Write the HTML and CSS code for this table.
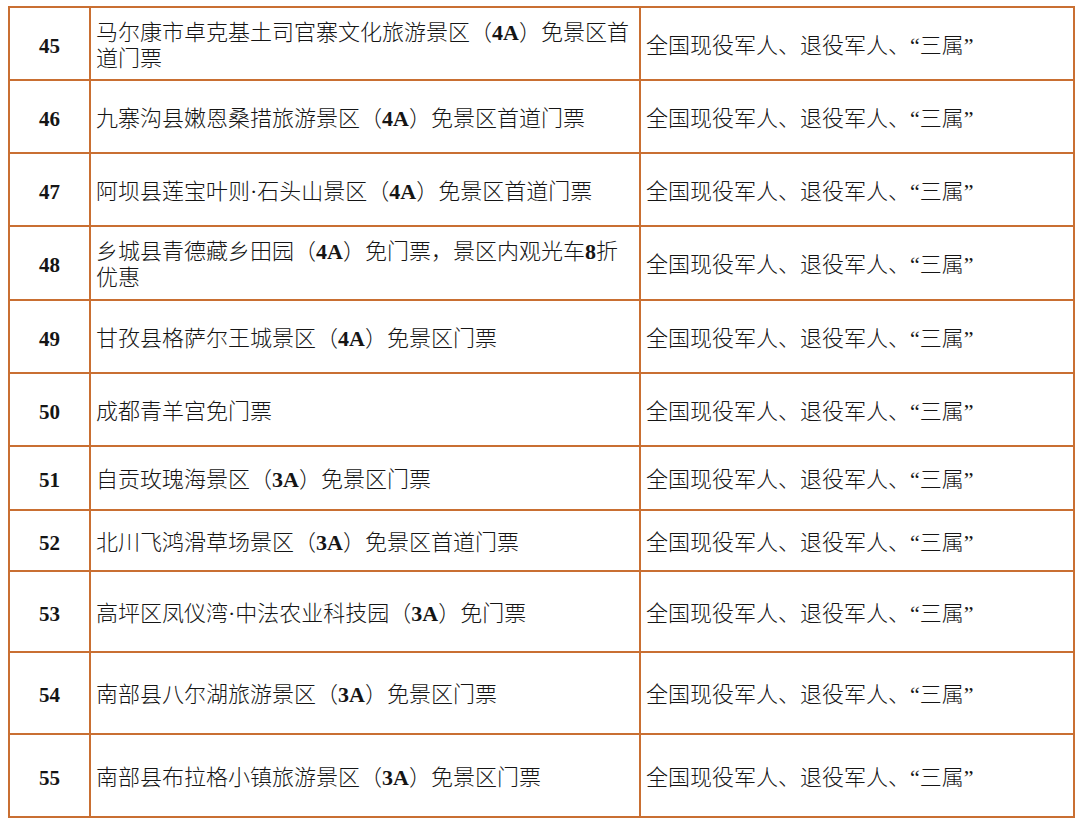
FILE: index.html
```html
<!DOCTYPE html>
<html lang="zh-CN">
<head>
<meta charset="utf-8">
<title>景区优惠名单</title>
<link rel="stylesheet" href="styles.css">
</head>
<body>
<table class="list">
  <colgroup>
    <col class="c-no">
    <col class="c-name">
    <col class="c-who">
  </colgroup>
  <tbody>
    <tr class="r73"><td class="no">45</td><td class="name">马尔康市卓克基土司官寨文化旅游景区（<b>4A</b>）免景区首道门票</td><td class="who">全国现役军人、退役军人、“三属”</td></tr>
    <tr class="r73"><td class="no">46</td><td class="name">九寨沟县嫩恩桑措旅游景区（<b>4A</b>）免景区首道门票</td><td class="who">全国现役军人、退役军人、“三属”</td></tr>
    <tr class="r73"><td class="no">47</td><td class="name">阿坝县莲宝叶则·石头山景区（<b>4A</b>）免景区首道门票</td><td class="who">全国现役军人、退役军人、“三属”</td></tr>
    <tr class="r74"><td class="no">48</td><td class="name">乡城县青德藏乡田园（<b>4A</b>）免门票，景区内观光车<b>8</b>折优惠</td><td class="who">全国现役军人、退役军人、“三属”</td></tr>
    <tr class="r73"><td class="no">49</td><td class="name">甘孜县格萨尔王城景区（<b>4A</b>）免景区门票</td><td class="who">全国现役军人、退役军人、“三属”</td></tr>
    <tr class="r73"><td class="no">50</td><td class="name">成都青羊宫免门票</td><td class="who">全国现役军人、退役军人、“三属”</td></tr>
    <tr class="r64"><td class="no">51</td><td class="name">自贡玫瑰海景区（<b>3A</b>）免景区门票</td><td class="who">全国现役军人、退役军人、“三属”</td></tr>
    <tr class="r61"><td class="no">52</td><td class="name">北川飞鸿滑草场景区（<b>3A</b>）免景区首道门票</td><td class="who">全国现役军人、退役军人、“三属”</td></tr>
    <tr class="r81"><td class="no">53</td><td class="name">高坪区凤仪湾·中法农业科技园（<b>3A</b>）免门票</td><td class="who">全国现役军人、退役军人、“三属”</td></tr>
    <tr class="r82"><td class="no">54</td><td class="name">南部县八尔湖旅游景区（<b>3A</b>）免景区门票</td><td class="who">全国现役军人、退役军人、“三属”</td></tr>
    <tr class="r83"><td class="no">55</td><td class="name">南部县布拉格小镇旅游景区（<b>3A</b>）免景区门票</td><td class="who">全国现役军人、退役军人、“三属”</td></tr>
  </tbody>
</table>
</body>
</html>
```

FILE: styles.css
```css
html, body {
  margin: 0;
  padding: 0;
  background: #ffffff;
}

body {
  padding: 6px 0 0 8px;
  font-family: "Liberation Serif", "Noto Sans CJK SC", serif;
  color: #151515;
}

.list {
  border-collapse: collapse;
  table-layout: fixed;
  width: 1065px;
}

.c-no { width: 81px; }
.c-name { width: 550px; }
.c-who { width: 434px; }

.list td {
  border: 2px solid #c96f32;
  padding: 4px 5px 0;
  vertical-align: middle;
  font-size: 22px;
  line-height: 26px;
  font-weight: 300;
}

.list td.no {
  text-align: center;
  font-weight: 700;
  font-size: 21px;
  padding: 4px 0 0;
}

.list td b {
  font-weight: 700;
}

.r73 { height: 73px; }
.r74 { height: 74px; }
.r64 { height: 64px; }
.r61 { height: 61px; }
.r81 { height: 81px; }
.r82 { height: 82px; }
.r83 { height: 83px; }
```
